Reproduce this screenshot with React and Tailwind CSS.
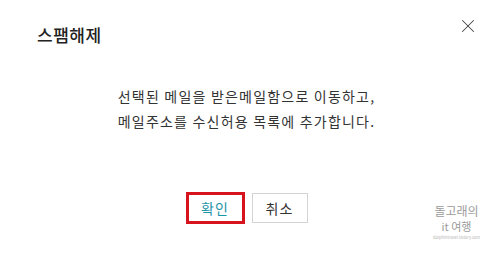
import { X } from "lucide-react";

export default function App() {
  return (
    <div
      className="relative w-[493px] h-[255px] bg-white overflow-hidden text-[#333]"
      style={{ fontFamily: '"Noto Sans CJK KR", "Noto Sans", sans-serif' }}
    >
      {/* HEADER */}
      <div className="flex items-start justify-between pl-[37px] pr-[14px] pt-[23px]">
        <h2 className="text-[17px] leading-[24px] font-medium tracking-[0.5px] text-[#222]">스팸해제</h2>
        <X size={22} strokeWidth={1.1} className="text-[#444] -mt-[8px]" />
      </div>

      {/* BODY */}
      <div className="mt-[37px] text-center text-[14px] leading-[25px] tracking-[1.2px] text-[#333]">
        <p>선택된 메일을 받은메일함으로 이동하고,</p>
        <p>메일주소를 수신허용 목록에 추가합니다.</p>
      </div>

      {/* BUTTONS */}
      <div className="mt-[58px] flex justify-center gap-[7px]">
        <button className="w-[59px] h-[32px] border-[3px] border-[#d7141e] bg-white text-[14px] tracking-[1px] text-[#1d95a8]">
          확인
        </button>
        <button className="w-[56px] h-[30px] mt-[1px] border border-[#d4d4d4] bg-white text-[14px] tracking-[1px] text-[#333]">
          취소
        </button>
      </div>

      {/* WATERMARK */}
      <div className="absolute right-[13px] top-[203px] flex flex-col items-center text-[#9a9a9a]">
        <span className="text-[12px] leading-[16px]">돌고래의</span>
        <span className="text-[11px] leading-[15px]">it 여행</span>
        <span className="text-[4px] leading-[5px] mt-[1px] text-[#b5b5b5]">dolphintravel.tistory.com</span>
      </div>
    </div>
  );
}
